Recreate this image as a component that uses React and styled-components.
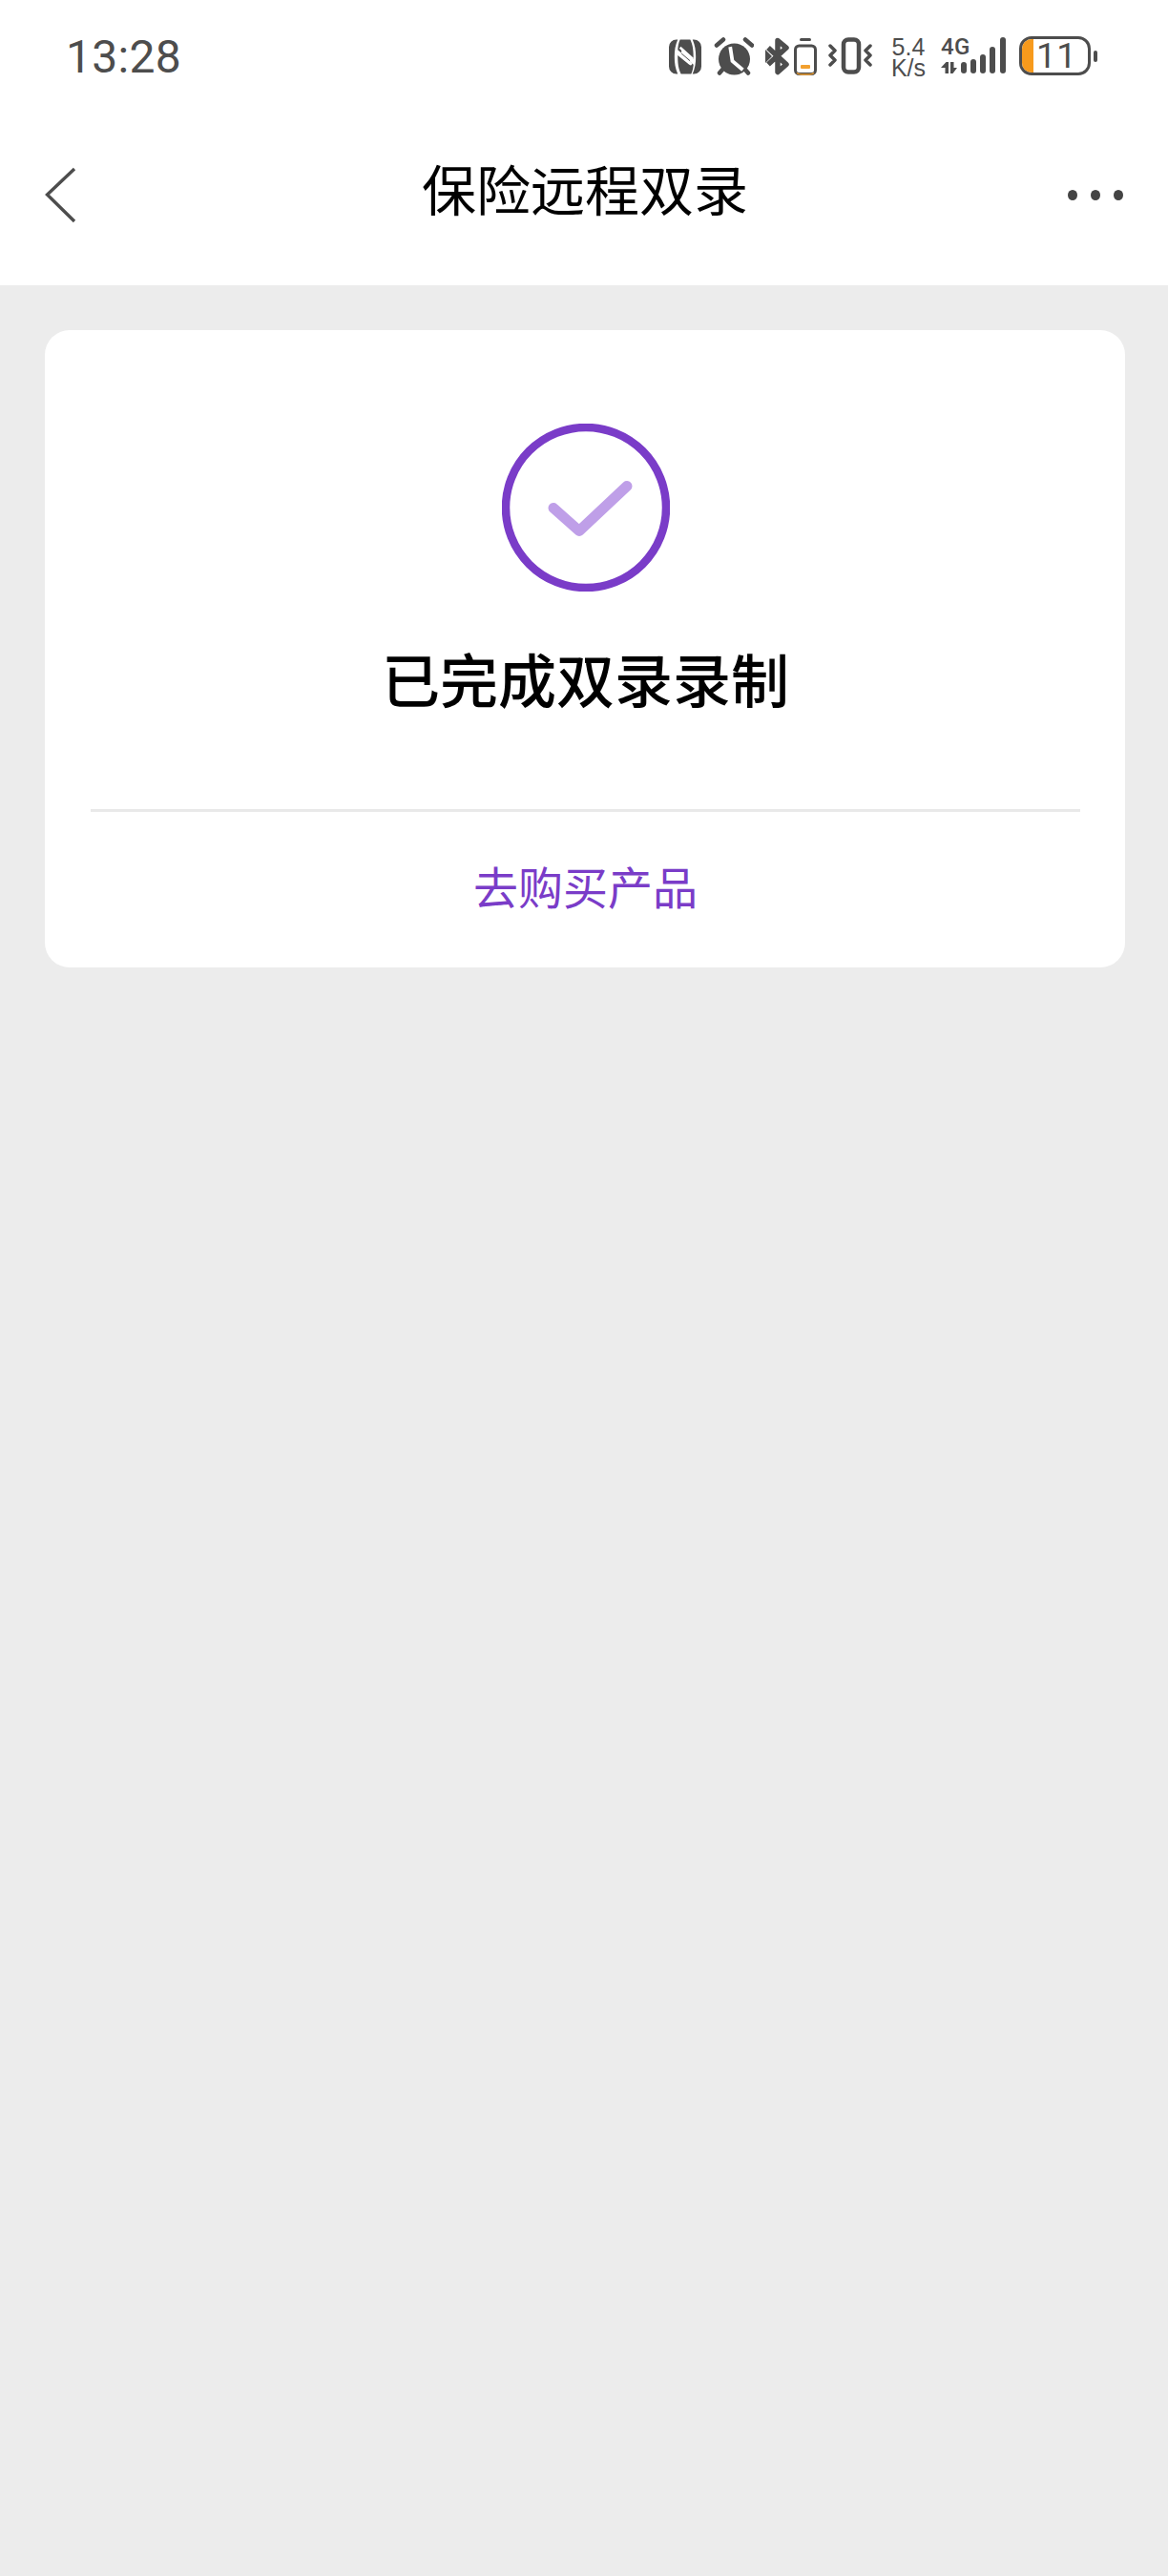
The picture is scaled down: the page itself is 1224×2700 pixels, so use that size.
import React from "react";
import styled, { createGlobalStyle } from "styled-components";

const Global = createGlobalStyle`
  html, body { margin: 0; padding: 0; background: #ececec; }
  * { box-sizing: border-box; }
`;
const CJK = `"Noto Sans CJK SC", "Liberation Sans", sans-serif`;
const DARK = "#4d4d4d";
const PURPLE = "#7a3cc8";

const Page = styled.div`
  width: 1224px;
  height: 2700px;
  background: #ececec;
  display: flex;
  flex-direction: column;
`;
const Header = styled.header`
  background: #fff;
  height: 299px;
  display: flex;
  flex-direction: column;
`;
const StatusBar = styled.div`
  height: 120px;
  padding: 0 74px 0 69px;
  display: flex;
  align-items: flex-start;
  justify-content: space-between;
`;
const Clock = styled.div`
  margin-top: 31px;
  font: 400 48px/58px Roboto, sans-serif;
  color: ${DARK};
  letter-spacing: 0.3px;
`;
const StatusIcons = styled.div`
  display: flex;
  align-items: flex-start;
  padding-top: 38px;
`;
const Glyph = styled.svg`
  display: block;
  flex: none;
  margin-left: ${(p) => p.$gap || 0}px;
  margin-top: ${(p) => p.$top || 0}px;
`;
const Speed = styled.div`
  margin-left: 19px;
  width: 38px;
  font: 400 25px/22px "Liberation Sans", sans-serif;
  color: ${DARK};
  text-align: center;
  white-space: nowrap;
`;
const Signal = styled.div`
  margin-left: 15px;
  width: 68px;
  height: 41px;
  position: relative;
`;
const FourG = styled.span`
  position: absolute;
  left: 0;
  top: 0;
  font: 500 24px/22px Roboto, sans-serif;
  letter-spacing: 0.3px;
  color: ${DARK};
`;
const Battery = styled.div`
  margin-left: 14px;
  display: flex;
  align-items: center;
`;
const BatteryBody = styled.div`
  width: 75px;
  height: 41px;
  border: 3.5px solid ${DARK};
  border-radius: 13px;
  overflow: hidden;
  display: flex;
  align-items: center;
`;
const BatteryFill = styled.div`
  width: 12px;
  height: 100%;
  background: #f79a1c;
  flex: none;
`;
const BatteryText = styled.span`
  margin-left: 3px;
  font: 400 37px/34px Roboto, sans-serif;
  letter-spacing: 0.5px;
  color: ${DARK};
`;
const BatteryNub = styled.div`
  width: 4px;
  height: 12px;
  margin-left: 3px;
  border-radius: 2px;
  background: ${DARK};
`;
const NavBar = styled.nav`
  height: 179px;
  padding: 0 47px;
  display: grid;
  grid-template-columns: 120px 1fr 120px;
  align-items: flex-start;
`;
const BackBtn = styled.div`
  padding-top: 54px;
`;
const Title = styled.h1`
  margin: 0;
  padding: 42px 0 0 2px;
  text-align: center;
  font: 400 57px/68px ${CJK};
  color: #000;
`;
const MoreBtn = styled.div`
  padding-top: 79px;
  display: flex;
  justify-content: flex-end;
  gap: 14px;
`;
const Dot = styled.span`
  width: 10px;
  height: 11px;
  border-radius: 50%;
  background: #444;
`;
const Content = styled.main`
  padding: 47px 45px 0 47px;
`;
const Card = styled.section`
  height: 668px;
  background: #fff;
  border-radius: 26px;
  padding: 98px 47px 0 48px;
  display: flex;
  flex-direction: column;
  align-items: center;
`;
const Heading = styled.h2`
  margin: 53px 0 0;
  font: 500 61px/76px ${CJK};
  color: #000;
`;
const Divider = styled.hr`
  width: 100%;
  margin: 99px 0 0;
  border: 0;
  height: 3px;
  background: #e9e9e9;
  flex: none;
`;
const Action = styled.a`
  margin-top: 45px;
  font: 400 47px/64px ${CJK};
  color: ${PURPLE};
`;

const Nfc = () => (
  <Glyph $gap={0} $top={3} width="34" height="37" viewBox="0 0 35 37">
    <path fill={DARK} d="M8 0h1.500C6.800 6 6 12 6 18.500S6.800 31 9.500 37H8a8 8 0 0 1-8-8V8a8 8 0 0 1 8-8z" />
    <path fill={DARK} d="M27 37h-1.500C28.200 31 29 25 29 18.500S28.200 6 25.500 0H27a8 8 0 0 1 8 8v21a8 8 0 0 1-8 8z" />
    <path fill={DARK} d="M12 0h11c3 6 3.500 12 3.500 21L13.500 10.500V16l13 11c-.3 3.500-1 7-2.500 10H13c-3-6-3.500-12-3.500-20L22.500 27.500V22L9.500 11c.3-4 1-8 2.500-11z" />
    <path fill="none" stroke="#fff" strokeWidth="2.600" d="M12 8.500l14 12.500M10 14l14.500 13" />
  </Glyph>
);
const Alarm = () => (
  <Glyph $gap={13} $top={1} width="42" height="40" viewBox="0 0 42 40">
    <circle cx="21.500" cy="23" r="16.500" fill={DARK} />
    <path stroke={DARK} strokeWidth="4.500" strokeLinecap="round" fill="none" d="M3 8.500L10 2.500M33 2.500L40 8.500M6 37.500l3-3.500M36 37.500l-3-3.500" />
    <path stroke="#fff" strokeWidth="3.800" fill="none" strokeLinecap="square" d="M17.500 12L19.500 25L29 33" />
  </Glyph>
);
const Bluetooth = () => (
  <Glyph $gap={12} $top={1} width="25" height="40" viewBox="0 0 25 40">
    <path fill="none" stroke={DARK} strokeWidth="5.500" strokeLinejoin="round" d="M3 11L22 28.500 13 36.500V3.500L22 11 3 28.500" />
    <path fill={DARK} d="M0 13l7 7-7 7z" />
  </Glyph>
);
const MiniBattery = () => (
  <Glyph $gap={5} $top={2} width="24" height="39" viewBox="0 0 24 39">
    <rect x="6" y="0" width="12" height="3" rx="1.500" fill={DARK} />
    <rect x="1.500" y="8" width="21" height="29.500" rx="4" fill="none" stroke={DARK} strokeWidth="3" />
    <rect x="7" y="28" width="10" height="4" rx="1" fill="#f2a02f" />
    <path d="M3 36.500q2 1.500 5 1.500h8q3 0 5-1.500" fill="none" stroke="#f2a02f" strokeWidth="1.500" />
  </Glyph>
);
const Vibrate = () => (
  <Glyph $gap={10} $top={1} width="48" height="39" viewBox="0 0 48 39">
    <rect x="18" y="2.500" width="16" height="34" rx="5" fill="none" stroke={DARK} strokeWidth="4.500" />
    <path fill="none" stroke={DARK} strokeWidth="3.500" strokeLinejoin="round" strokeLinecap="round" d="M4 9l5 5-5 5 5 5-5 5M46 9l-5 5 5 5-5 5 5 5" />
  </Glyph>
);
const Bars = () => (
  <svg width="68" height="41" viewBox="0 0 68 41" style={{ display: "block" }}>
    <path fill={DARK} d="M0 33l5.500-6H8v12H4.500v-6zM10 27h3.500v6H17l-4.500 6H10z" />
    {[
      [21, 27],
      [31, 24],
      [41, 19],
      [51, 11],
      [62, 1],
    ].map(([x, y]) => (
      <rect key={x} x={x} y={y} width="6" height={39 - y} rx="3" fill={DARK} />
    ))}
  </svg>
);

export default function App() {
  return (
    <Page>
      <Global />
      <Header>
        <StatusBar>
          <Clock>13:28</Clock>
          <StatusIcons>
            <Nfc />
            <Alarm />
            <Bluetooth />
            <MiniBattery />
            <Vibrate />
            <Speed>
              5.4
              <br />
              K/s
            </Speed>
            <Signal>
              <FourG>4G</FourG>
              <Bars />
            </Signal>
            <Battery>
              <BatteryBody>
                <BatteryFill />
                <BatteryText>11</BatteryText>
              </BatteryBody>
              <BatteryNub />
            </Battery>
          </StatusIcons>
        </StatusBar>
        <NavBar>
          <BackBtn>
            <svg width="34" height="60" viewBox="0 0 34 60" style={{ display: "block" }}>
              <path d="M31 3L2.500 30 31 58" fill="none" stroke={DARK} strokeWidth="3.400" />
            </svg>
          </BackBtn>
          <Title>保险远程双录</Title>
          <MoreBtn>
            <Dot />
            <Dot />
            <Dot />
          </MoreBtn>
        </NavBar>
      </Header>
      <Content>
        <Card>
          <svg width="176" height="176" viewBox="0 0 176 176" style={{ display: "block", flex: "none" }}>
            <circle cx="88" cy="88" r="84" fill="none" stroke={PURPLE} strokeWidth="8.500" />
            <path d="M54 88.500L81 112.500 131 65.500" fill="none" stroke="#bf9fe8" strokeWidth="11" strokeLinecap="round" strokeLinejoin="round" />
          </svg>
          <Heading>已完成双录录制</Heading>
          <Divider />
          <Action>去购买产品</Action>
        </Card>
      </Content>
    </Page>
  );
}
